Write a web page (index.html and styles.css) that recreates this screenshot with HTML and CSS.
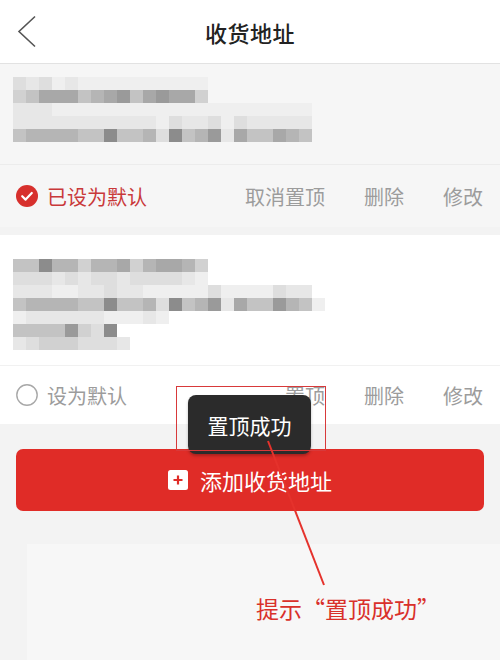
FILE: index.html
```html
<!DOCTYPE html>
<html lang="zh-CN">
<head>
<meta charset="utf-8">
<title>收货地址</title>
<link rel="stylesheet" href="styles.css">
</head>
<body>
<div class="page">
  <header class="topbar">
    <svg class="back" width="20" height="34" viewBox="0 0 20 34"><polyline points="18,1.5 2,16.5 18,31.5" fill="none" stroke="#555" stroke-width="1.6"/></svg>
    <h1 class="title">收货地址</h1>
  </header>

  <section class="card card-active">
    <div class="mosaic m-first">
      <div class="mrow"><i class="c3"></i><i class="c2"></i><i class="c3"></i><i class="c1"></i><i class="c2"></i><i class="c1"></i><i class="c1"></i><i class="c1"></i><i class="c1"></i><i class="c1"></i><i class="c1"></i><i class="c1"></i><i class="c1"></i><i class="c1"></i><i class="c1"></i></div>
      <div class="mrow"><i class="c4"></i><i class="c5"></i><i class="c7"></i><i class="c7"></i><i class="c7"></i><i class="c5"></i><i class="c6"></i><i class="c7"></i><i class="c8"></i><i class="c5"></i><i class="c7"></i><i class="c8"></i><i class="c7"></i><i class="c7"></i><i class="c4"></i></div>
      <div class="mrow"><i class="c2"></i><i class="c2"></i><i class="c2"></i><i class="c1"></i><i class="c1"></i><i class="c1"></i><i class="c1"></i><i class="c1"></i><i class="c1"></i><i class="c1"></i><i class="c1"></i><i class="c1"></i><i class="c1"></i><i class="c1"></i><i class="c1"></i><i class="c1"></i><i class="c1"></i><i class="c1"></i><i class="c1"></i><i class="c1"></i><i class="c1"></i><i class="c1"></i><i class="c1"></i></div>
      <div class="mrow"><i class="c2"></i><i class="c2"></i><i class="c2"></i><i class="c2"></i><i class="c2"></i><i class="c2"></i><i class="c2"></i><i class="c2"></i><i class="c2"></i><i class="c2"></i><i class="c2"></i><i class="c1"></i><i class="c3"></i><i class="c2"></i><i class="c2"></i><i class="c3"></i><i class="c1"></i><i class="c3"></i><i class="c2"></i><i class="c2"></i><i class="c2"></i><i class="c2"></i><i class="c2"></i></div>
      <div class="mrow"><i class="c5"></i><i class="c6"></i><i class="c6"></i><i class="c6"></i><i class="c6"></i><i class="c5"></i><i class="c5"></i><i class="c9"></i><i class="c5"></i><i class="c5"></i><i class="c6"></i><i class="c3"></i><i class="c9"></i><i class="c5"></i><i class="c6"></i><i class="c8"></i><i class="c2"></i><i class="c7"></i><i class="c5"></i><i class="c5"></i><i class="c7"></i><i class="c6"></i><i class="c5"></i></div>
    </div>
    <div class="actions">
      <div class="default is-default">
        <svg class="radio" width="22" height="22" viewBox="0 0 22 22"><circle cx="11" cy="11" r="11" fill="#d7302d"/><polyline points="6.2,11.2 9.6,14.6 15.8,8" fill="none" stroke="#fff" stroke-width="2.2" stroke-linecap="round" stroke-linejoin="round"/></svg>
        <span>已设为默认</span>
      </div>
      <div class="links">
        <span>取消置顶</span>
        <span>删除</span>
        <span>修改</span>
      </div>
    </div>
  </section>

  <section class="card card-plain">
    <div class="mosaic m-second">
      <div class="mrow"><i class="c5"></i><i class="c5"></i><i class="c9"></i><i class="c6"></i><i class="c6"></i><i class="c4"></i><i class="c6"></i><i class="c6"></i><i class="c7"></i><i class="c4"></i><i class="c6"></i><i class="c7"></i><i class="c7"></i><i class="c6"></i><i class="c4"></i></div>
      <div class="mrow"><i class="c3"></i><i class="c3"></i><i class="c3"></i><i class="c2"></i><i class="c3"></i><i class="c2"></i><i class="c3"></i><i class="c3"></i><i class="c2"></i><i class="c3"></i><i class="c3"></i><i class="c3"></i><i class="c3"></i><i class="c2"></i><i class="c1"></i></div>
      <div class="mrow"><i class="c2"></i><i class="c2"></i><i class="c2"></i><i class="c1"></i><i class="c1"></i><i class="c2"></i><i class="c2"></i><i class="c3"></i><i class="c2"></i><i class="c2"></i><i class="c1"></i><i class="c1"></i><i class="c1"></i><i class="c1"></i><i class="c1"></i><i class="c3"></i><i class="c1"></i><i class="c1"></i><i class="c1"></i><i class="c1"></i><i class="c3"></i><i class="c2"></i><i class="c2"></i></div>
      <div class="mrow"><i class="c5"></i><i class="c6"></i><i class="c6"></i><i class="c6"></i><i class="c6"></i><i class="c5"></i><i class="c5"></i><i class="c9"></i><i class="c5"></i><i class="c5"></i><i class="c6"></i><i class="c3"></i><i class="c9"></i><i class="c5"></i><i class="c6"></i><i class="c8"></i><i class="c2"></i><i class="c7"></i><i class="c5"></i><i class="c5"></i><i class="c8"></i><i class="c6"></i><i class="c5"></i><i class="c1"></i></div>
      <div class="mrow"><i class="c1"></i><i class="c2"></i><i class="c2"></i><i class="c2"></i><i class="c2"></i><i class="c2"></i><i class="c2"></i><i class="c1"></i><i class="c1"></i><i class="c1"></i><i class="c2"></i><i class="c1"></i></div>
      <div class="mrow"><i class="c5"></i><i class="c5"></i><i class="c5"></i><i class="c5"></i><i class="c8"></i><i class="c4"></i><i class="c3"></i><i class="c9"></i></div>
      <div class="mrow"><i class="c2"></i><i class="c3"></i><i class="c4"></i><i class="c4"></i><i class="c4"></i><i class="c3"></i><i class="c3"></i><i class="c3"></i><i class="c2"></i></div>
    </div>
    <div class="actions">
      <div class="default">
        <svg class="radio" width="22" height="22" viewBox="0 0 22 22"><circle cx="11" cy="11" r="10.2" fill="none" stroke="#a8a8a8" stroke-width="1.4"/></svg>
        <span>设为默认</span>
      </div>
      <div class="links">
        <span>置顶</span>
        <span>删除</span>
        <span>修改</span>
      </div>
    </div>
  </section>

  <div class="footer">
    <button class="add-btn" type="button">
      <svg class="plus" width="20" height="20" viewBox="0 0 20 20"><rect x="0" y="0" width="20" height="20" rx="2.5" fill="#fff"/><path d="M10 5.5v9M5.5 10h9" stroke="#e02c27" stroke-width="2.2"/></svg>
      <span>添加收货地址</span>
    </button>
    <div class="ghost"></div>
  </div>

  <div class="toast">置顶成功</div>
  <div class="mark-box"></div>
  <svg class="mark-line" width="500" height="660" viewBox="0 0 500 660"><line x1="268" y1="441" x2="324" y2="585" stroke="#e5322c" stroke-width="2"/></svg>
  <div class="mark-note">提示“置顶成功”</div>
</div>
</body>
</html>
```

FILE: styles.css
```css
* { box-sizing: border-box; }
html, body { margin: 0; padding: 0; }
body {
  width: 500px;
  height: 660px;
  overflow: hidden;
  background: #f3f3f3;
  font-family: "Noto Sans CJK SC", "Noto Sans", sans-serif;
}
.page {
  position: relative;
  width: 500px;
  height: 660px;
  overflow: hidden;
  background: #f3f3f3;
}
.topbar {
  position: relative;
  height: 64px;
  background: #fff;
  border-bottom: 1px solid #e2e2e2;
  display: flex;
  align-items: center;
  justify-content: center;
}
.back {
  position: absolute;
  left: 17px;
  top: 15px;
}
.title {
  margin: 0;
  font-size: 22px;
  font-weight: 500;
  color: #222;
  letter-spacing: 0.5px;
}
.card {
  background: #fff;
}
.card-active {
  background: #f6f6f6;
  margin-bottom: 8px;
}
.card-plain {
  background: #fff;
}
.mosaic {
  display: flex;
  flex-direction: column;
  padding-left: 13px;
  border-bottom: 1px solid #ececec;
}
.m-first {
  padding-top: 13px;
  padding-bottom: 22px;
}
.m-second {
  padding-top: 24px;
  padding-bottom: 15px;
  border-bottom-color: #f1f1f1;
}
.mrow {
  display: flex;
  height: 13px;
}
.mrow i {
  display: block;
  width: 13px;
  height: 13px;
}
.c1 { background: #efefef; }
.c2 { background: #e7e7e7; }
.c3 { background: #dedede; }
.c4 { background: #d1d1d1; }
.c5 { background: #c3c3c3; }
.c6 { background: #b5b5b5; }
.c7 { background: #a8a8a8; }
.c8 { background: #9a9a9a; }
.c9 { background: #8c8c8c; }
.actions {
  display: flex;
  align-items: center;
  justify-content: space-between;
  padding: 0 17px 0 16px;
  font-size: 20px;
  color: #9c9c9c;
}
.card-active .actions { height: 62px; }
.card-plain .actions { height: 58px; }
.default {
  display: flex;
  align-items: center;
  gap: 9px;
}
.radio { display: block; }
.is-default { color: #c9393a; }
.links {
  display: flex;
  gap: 39px;
}
.footer {
  padding-top: 25px;
}
.add-btn {
  display: flex;
  align-items: center;
  justify-content: center;
  gap: 12px;
  width: 468px;
  height: 62px;
  margin: 0 16px;
  border: none;
  border-radius: 7px;
  background: #e02c27;
  color: #fff;
  font-family: inherit;
  font-size: 22px;
  padding: 0;
}
.plus { display: block; }
.ghost {
  margin: 33px 0 0 27px;
  height: 200px;
  background: #f7f7f7;
}
.toast {
  position: absolute;
  left: 188px;
  top: 395px;
  width: 123px;
  height: 59px;
  border-radius: 8px;
  background: #2b2b2b;
  color: #fff;
  font-size: 21px;
  display: flex;
  align-items: center;
  justify-content: center;
  box-shadow: 0 2px 3px rgba(0,0,0,0.25);
}
.mark-box {
  position: absolute;
  left: 176px;
  top: 386px;
  width: 150px;
  height: 65px;
  border: 1.5px solid #d8393a;
}
.mark-line {
  position: absolute;
  left: 0;
  top: 0;
  pointer-events: none;
}
.mark-note {
  position: absolute;
  left: 256px;
  top: 591px;
  font-size: 23px;
  color: #d9302a;
  white-space: nowrap;
}
```
